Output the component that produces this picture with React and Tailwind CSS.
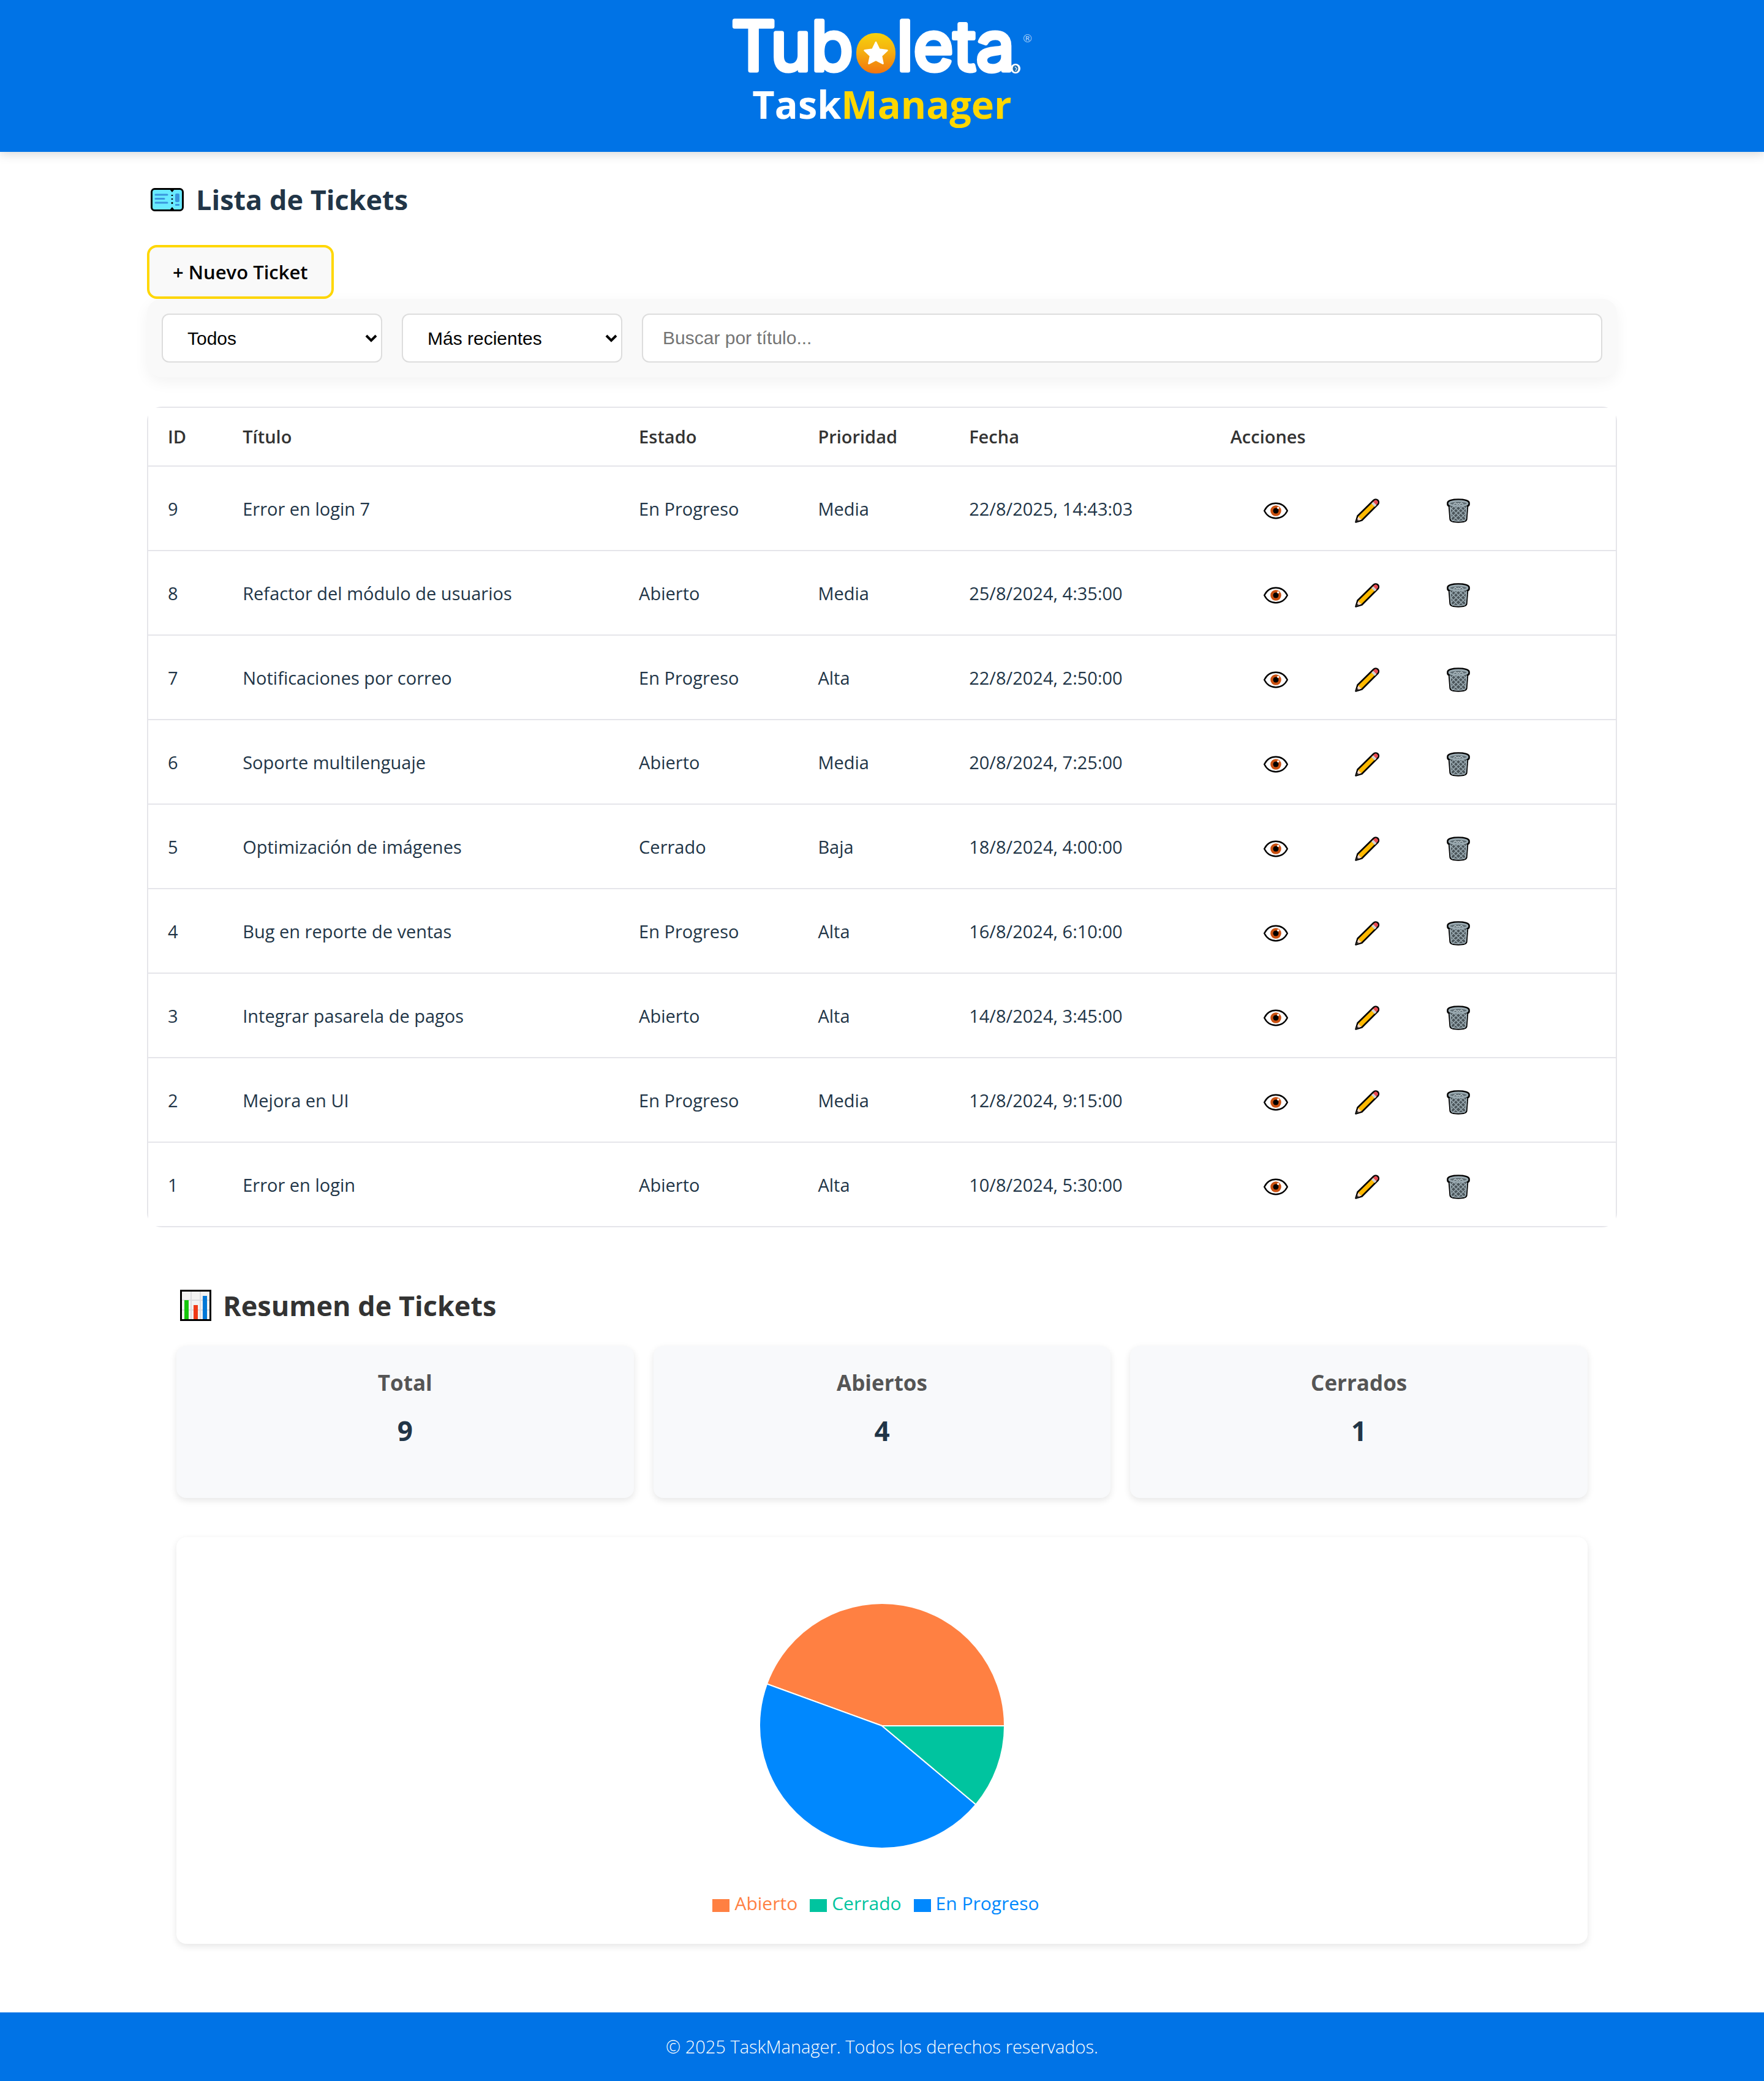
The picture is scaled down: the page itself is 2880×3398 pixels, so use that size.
import React from "react";

const tickets = [
  { id: 9, title: "Error en login 7", status: "En Progreso", priority: "Media", date: "22/8/2025, 14:43:03" },
  { id: 8, title: "Refactor del módulo de usuarios", status: "Abierto", priority: "Media", date: "25/8/2024, 4:35:00" },
  { id: 7, title: "Notificaciones por correo", status: "En Progreso", priority: "Alta", date: "22/8/2024, 2:50:00" },
  { id: 6, title: "Soporte multilenguaje", status: "Abierto", priority: "Media", date: "20/8/2024, 7:25:00" },
  { id: 5, title: "Optimización de imágenes", status: "Cerrado", priority: "Baja", date: "18/8/2024, 4:00:00" },
  { id: 4, title: "Bug en reporte de ventas", status: "En Progreso", priority: "Alta", date: "16/8/2024, 6:10:00" },
  { id: 3, title: "Integrar pasarela de pagos", status: "Abierto", priority: "Alta", date: "14/8/2024, 3:45:00" },
  { id: 2, title: "Mejora en UI", status: "En Progreso", priority: "Media", date: "12/8/2024, 9:15:00" },
  { id: 1, title: "Error en login", status: "Abierto", priority: "Alta", date: "10/8/2024, 5:30:00" },
];

const summary = [
  { label: "Total", value: 9 },
  { label: "Abiertos", value: 4 },
  { label: "Cerrados", value: 1 },
];

const legend = [
  { label: "Abierto", text: "text-[#ff8042]", box: "bg-[#ff8042]" },
  { label: "Cerrado", text: "text-[#00c49f]", box: "bg-[#00c49f]" },
  { label: "En Progreso", text: "text-[#0088fe]", box: "bg-[#0088fe]" },
];

function Logo() {
  return (
    <svg className="overflow-visible" width="488" height="88" viewBox="0 0 488 88" role="img" aria-label="Tuboleta">
      <defs>
        <linearGradient id="ball" x1="0" y1="0" x2="0" y2="1">
          <stop offset="0" stopColor="#f5d20c" />
          <stop offset="0.45" stopColor="#f5b010" />
          <stop offset="1" stopColor="#f2740f" />
        </linearGradient>
      </defs>
      <g
        fill="#fff"
        stroke="#fff"
        strokeWidth="7"
        strokeLinejoin="round"
        fontFamily="Inter, sans-serif"
        fontWeight="400"
        fontSize="112"
      >
        <text x="-2" y="83">Tub</text>
        <text x="268" y="83">leta</text>
      </g>
      <rect x="202" y="22" width="64" height="66" rx="31" fill="url(#ball)" />
      <path
        d="M234 37l5.500 11.500 13 1.800-9.500 9 2.600 12.500-11.600-6-11.600 6 2.600-12.500-9.500-9 13-1.800z"
        fill="#fff"
        stroke="#fff"
        strokeWidth="2.500"
        strokeLinejoin="round"
      />
      <circle cx="462" cy="80" r="8" fill="#fff" />
      <ellipse cx="462" cy="80" rx="4.500" ry="5.500" fill="#1b6db0" />
      <path d="M461 77l3 3-2 4" stroke="#cfe3f7" strokeWidth="1.500" fill="none" />
      <text x="474" y="37" fill="#a9cff8" fontSize="18" fontFamily="Lato, sans-serif">®</text>
    </svg>
  );
}

function TicketIcon() {
  return (
    <svg width="54" height="38" viewBox="0 0 54 38" aria-hidden="true">
      <rect x="1.500" y="1.500" width="51" height="35" rx="5" fill="#69eaff" stroke="#000" strokeWidth="3" />
      <path d="M31 2h8l-4 5zM31 36h8l-4-5z" fill="#000" />
      <path d="M35 11v2M35 17v2M35 23v3" stroke="#000" strokeWidth="2.500" />
      <path d="M8 11h19M8 17.500h14M8 24h19" stroke="#3a96dd" strokeWidth="3" strokeLinecap="round" />
      <rect x="40" y="9" width="7" height="14" rx="2" fill="#3a96dd" />
      <rect x="40" y="26" width="7" height="3" rx="1" fill="#3a96dd" />
    </svg>
  );
}

function ChartIcon() {
  return (
    <svg width="52" height="52" viewBox="0 0 52 52" aria-hidden="true">
      <rect x="1.500" y="1.500" width="48" height="48" fill="#f2f2f2" stroke="#000" strokeWidth="3" />
      <path d="M18 3v45M33 3v45M3 17h45M3 33h45" stroke="#dcdcdf" strokeWidth="2" />
      <rect x="7" y="17" width="7" height="31" fill="#16c60c" />
      <rect x="22" y="25" width="7" height="23" fill="#f03a17" />
      <rect x="37" y="10" width="7" height="38" fill="#0078d7" />
    </svg>
  );
}

function EyeIcon() {
  return (
    <svg width="40" height="40" viewBox="0 0 40 40" aria-hidden="true">
      <path
        d="M1.200 20C5 12.500 12 7.800 20 7.800S35 12.500 38.800 20C35 27.500 28 32.200 20 32.200S5 27.500 1.200 20z"
        fill="#fff"
        stroke="#000"
        strokeWidth="2.400"
        strokeLinejoin="round"
      />
      <circle cx="20" cy="20" r="8.800" fill="#ca5010" />
      <circle cx="20" cy="20" r="4.500" fill="#000" />
      <circle cx="23.800" cy="15.200" r="1.800" fill="#fff" />
    </svg>
  );
}

function PencilIcon() {
  return (
    <svg width="40" height="40" viewBox="0 0 40 40" aria-hidden="true">
      <path
        d="M1.500 38.500L4.500 28.500 30.500 3a4.800 4.800 0 0 1 7 0 4.800 4.800 0 0 1 0 6.500L11.500 35.500z"
        fill="#ffb900"
        stroke="#000"
        strokeWidth="2.600"
        strokeLinejoin="round"
      />
      <path d="M5.500 29.500l5.200 5-8 3z" fill="#f7d7c4" />
      <path d="M3.800 33.600l2.900 2.600-4.700 1.600z" fill="#383838" />
      <path d="M27 8.200l5.500 5.500 3-3-5.500-5.500z" fill="#d2d2d2" />
      <path d="M30 5.200l1.600-1.500a3.500 3.500 0 0 1 5 5l-1.500 1.600z" fill="#e74856" />
    </svg>
  );
}

function TrashIcon() {
  return (
    <svg width="40" height="40" viewBox="0 0 40 40" aria-hidden="true">
      <path
        d="M2.500 7C2.500 3.500 10 1.500 20 1.500S37.500 3.500 37.500 7v2.500c0 1.500-1 2.500-2.500 3L33.300 34c-.2 3-6 4.500-13.300 4.500S6.900 37 6.700 34L5 12.500c-1.500-.5-2.500-1.500-2.500-3z"
        fill="#4a5459"
        stroke="#000"
        strokeWidth="2.600"
      />
      <path
        d="M12 12L32.500 32.500M20 12L33 25M27 12l7 7M7 15l23 22M7.500 23.500L21 37M28 12L7.500 32.500M20 12L7 25M13 12l-6 6M33 15L10 37M32.500 23.500L19 37"
        fill="none"
        stroke="#9babb2"
        strokeWidth="1.500"
      />
      <path d="M6.500 13L8.200 34M33.500 13L31.800 34" stroke="#9babb2" strokeWidth="2" />
      <path d="M8 34.500c3 1.800 6 2.500 12 2.500s9-.7 12-2.500" fill="none" stroke="#9babb2" strokeWidth="1.500" />
      <ellipse cx="20" cy="8" rx="15" ry="4" fill="#5e6c72" stroke="#9babb2" strokeWidth="2.800" />
      <path d="M12 9.500l3-2.500 3 2.500 2-1.500 2 1.500 3-2.500 3 2.500" fill="none" stroke="#c4d0d5" strokeWidth="1.300" />
    </svg>
  );
}

function Select({ label, options }) {
  return (
    <div className="relative w-[360px]">
      <select
        aria-label={label}
        className="h-20 w-full appearance-none rounded-xl border-2 border-[#ddd] bg-white pl-10 pr-12 font-['Liberation_Sans',sans-serif] text-[30px] text-black"
      >
        {options.map((o) => (
          <option key={o}>{o}</option>
        ))}
      </select>
      <svg className="pointer-events-none absolute right-2 top-8" width="20" height="16" viewBox="0 0 20 16" aria-hidden="true">
        <path d="M2 4l8 8 8-8" fill="none" stroke="#000" strokeWidth="4" />
      </svg>
    </div>
  );
}

function Pie() {
  const slices = [
    { from: 0, to: 160, color: "#ff8042" },
    { from: 160, to: 320, color: "#0088fe" },
    { from: 320, to: 360, color: "#00c49f" },
  ];
  const point = (deg) => {
    const a = (deg * Math.PI) / 180;
    return `${200 + 200 * Math.cos(a)} ${200 - 200 * Math.sin(a)}`;
  };
  return (
    <svg className="mt-19 overflow-visible" width="400" height="400" viewBox="0 0 400 400" role="img" aria-label="Tickets por estado">
      {slices.map((s) => (
        <path
          key={s.color}
          d={`M200 200L${point(s.from)}A200 200 0 0 0 ${point(s.to)}z`}
          fill={s.color}
          stroke="#fff"
          strokeWidth="2"
        />
      ))}
    </svg>
  );
}

const columns = [
  { label: "ID", width: "w-[5.1%]" },
  { label: "Título", width: "w-[27%]" },
  { label: "Estado", width: "w-[12.2%]" },
  { label: "Prioridad", width: "w-[10.3%]" },
  { label: "Fecha", width: "w-[17.8%]" },
  { label: "Acciones", width: "w-auto" },
];

const actions = [
  { label: "Ver", Icon: EyeIcon },
  { label: "Editar", Icon: PencilIcon },
  { label: "Eliminar", Icon: TrashIcon },
];

export default function App() {
  return (
    <div className="flex min-h-screen flex-col bg-white font-['Open_Sans',sans-serif] text-[#213547]">
      <header className="flex flex-col items-center bg-[#0073e6] pt-8 pb-7 shadow-[0_4px_16px_rgba(0,0,0,0.15)]">
        <Logo />
        <h1 className="text-[63px] leading-[100px] font-bold text-white">
          Task<span className="text-[#ffd700]">Manager</span>
        </h1>
      </header>

      <main className="mx-auto w-full max-w-[2400px] flex-1 pt-10.5 pb-28">
        <h2 className="flex items-center gap-5 pl-1.5 text-[45px] leading-[72px] font-bold">
          <TicketIcon />
          Lista de Tickets
        </h2>

        <button
          type="button"
          className="mt-9.5 block h-22 rounded-2xl border-4 border-[#ffd700] bg-[#f9f9f9] px-9.5 text-[31px] font-semibold text-black"
        >
          + Nuevo Ticket
        </button>

        <div className="flex gap-8 rounded-3xl bg-[#f9f9f9] p-6 shadow-[0_8px_24px_rgba(0,0,0,0.05)]">
          <Select label="Estado" options={["Todos", "Abierto", "En Progreso", "Cerrado"]} />
          <Select label="Orden" options={["Más recientes", "Más antiguos"]} />
          <input
            type="text"
            aria-label="Buscar por título"
            placeholder="Buscar por título..."
            className="h-20 min-w-0 flex-1 rounded-xl border-2 border-[#ddd] bg-white px-8 font-['Liberation_Sans',sans-serif] text-[30px] text-black placeholder:text-[#757575]"
          />
        </div>

        <div className="mt-12 overflow-hidden rounded-3xl bg-white">
          <div className="border-x-2 border-t-2 border-[#e5e5ea]">
            <table className="w-full table-fixed border-separate border-spacing-0 text-left text-[29px]">
              <thead>
                <tr>
                  {columns.map((c) => (
                    <th
                      key={c.label}
                      scope="col"
                      className={`${c.width} h-24 border-b-2 border-[#e5e5ea] px-8 font-semibold text-[#333]`}
                    >
                      {c.label}
                    </th>
                  ))}
                </tr>
              </thead>
              <tbody>
                {tickets.map((t) => (
                  <tr key={t.id}>
                    {[t.id, t.title, t.status, t.priority, t.date].map((v, i) => (
                      <td key={i} className="h-[138px] border-b-2 border-[#e5e5ea] px-8 pt-0.5">{v}</td>
                    ))}
                    <td className="h-[138px] border-b-2 border-[#e5e5ea] px-8 pt-0.5">
                      <div className="flex">
                        {actions.map(({ label, Icon }) => (
                          <button
                            key={label}
                            type="button"
                            aria-label={`${label} ticket ${t.id}`}
                            className="flex w-[149px] justify-center pt-1.5"
                          >
                            <Icon />
                          </button>
                        ))}
                      </div>
                    </td>
                  </tr>
                ))}
              </tbody>
            </table>
          </div>
        </div>

        <section className="px-12 pt-23">
          <h2 className="flex items-center gap-4.5 pl-1.5 text-[45px] leading-[72px] font-bold text-[#333]">
            <ChartIcon />
            Resumen de Tickets
          </h2>
          <div className="mt-7.5 grid grid-cols-3 gap-8">
            {summary.map((s) => (
              <div
                key={s.label}
                className="min-h-[248px] rounded-2xl bg-[#f8f9fb] p-8 text-center shadow-[0_4px_12px_rgba(0,0,0,0.1)]"
              >
                <h3 className="text-[35px] leading-[56px] font-bold text-[#555]">{s.label}</h3>
                <p className="mt-4 text-[44px] leading-[68px] font-bold">{s.value}</p>
              </div>
            ))}
          </div>
          <div className="mt-16 flex flex-col items-center rounded-2xl bg-white px-8 pt-8 pb-10.5 shadow-[0_4px_12px_rgba(0,0,0,0.1)]">
            <Pie />
            <ul className="mt-16.5 flex text-[30px] leading-[48px]">
              {legend.map((l) => (
                <li key={l.label} className={`mr-5 flex items-center gap-2 ${l.text}`}>
                  <span className={`mt-1.5 h-[21px] w-7 ${l.box}`} />
                  {l.label}
                </li>
              ))}
            </ul>
          </div>
        </section>
      </main>

      <footer className="bg-[#0073e6] py-8 text-center text-[29px] leading-[48px] font-light text-white">
        © 2025 TaskManager. Todos los derechos reservados.
      </footer>
    </div>
  );
}
